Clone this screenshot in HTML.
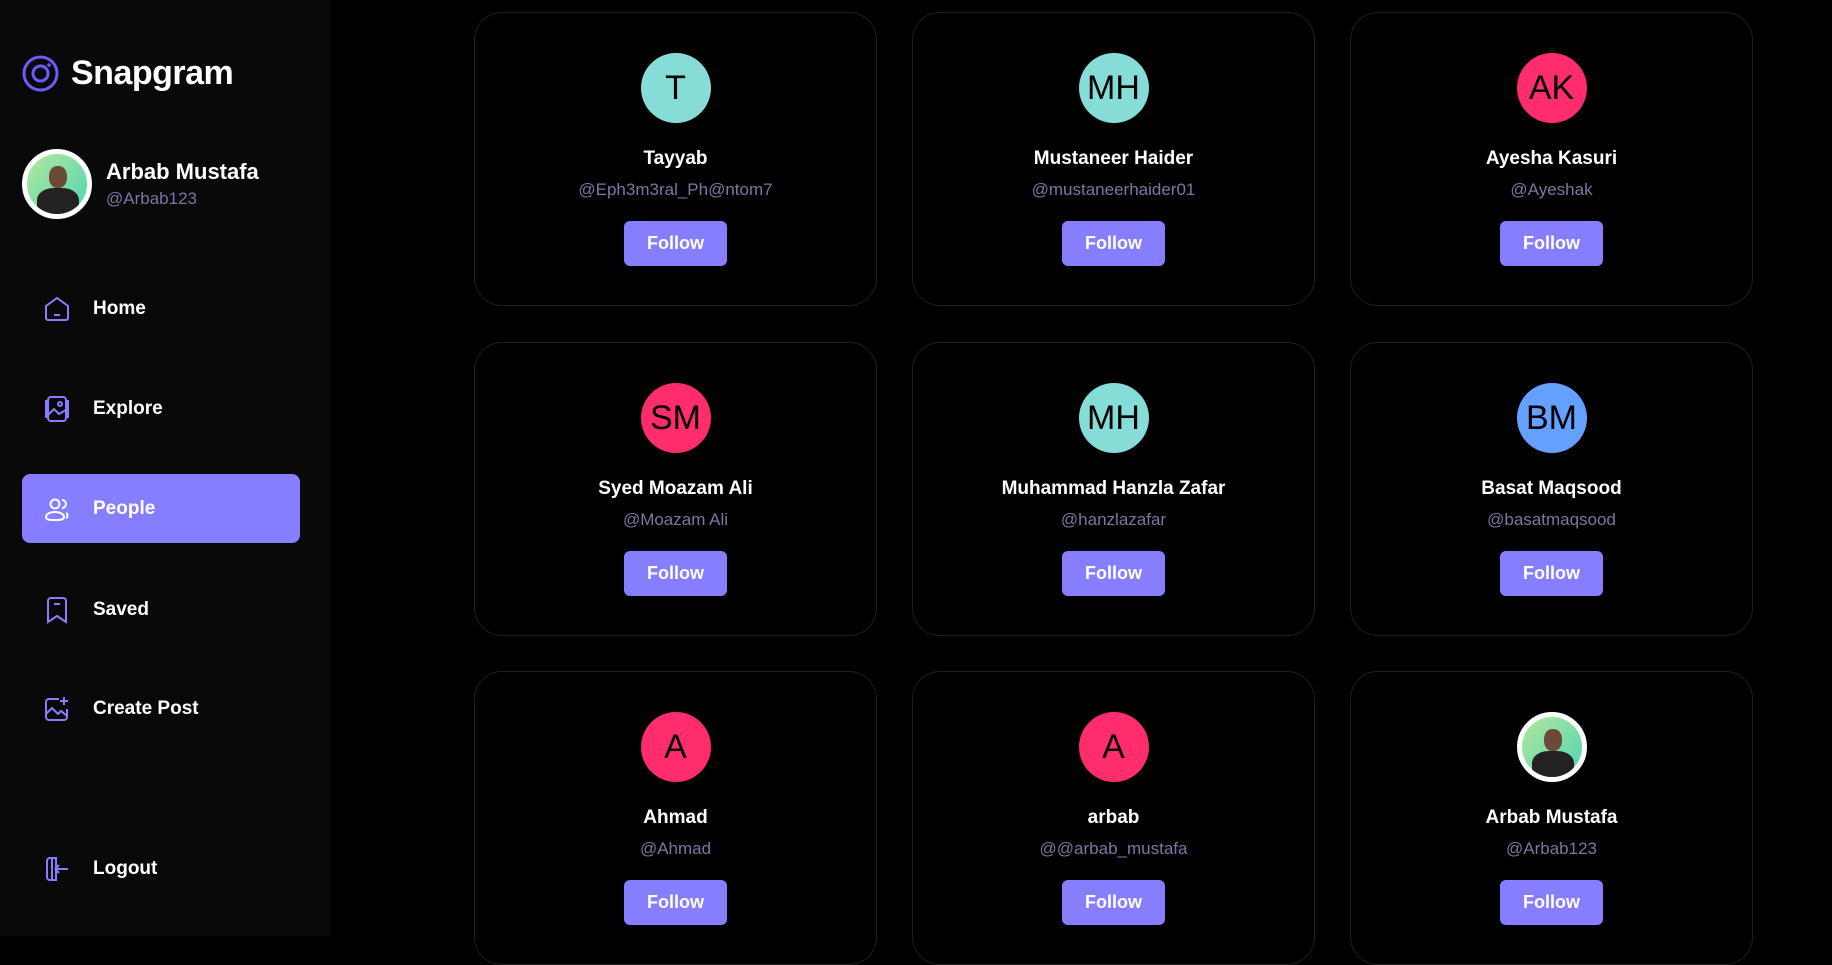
<!DOCTYPE html>
<html><head><meta charset="utf-8"><style>
*{box-sizing:border-box;margin:0;padding:0}
body{width:1832px;height:936px;background:#000;font-family:"Liberation Sans",sans-serif;color:#fff;overflow:hidden;position:relative}
.side{position:absolute;left:0;top:0;width:330px;height:936px;background:#09090a}
.logo{position:absolute;left:22px;top:54px;display:flex;align-items:center}
.logo span{font-size:34px;font-weight:bold;margin-left:12px;letter-spacing:-0.5px}
.prof{position:absolute;left:22px;top:149px;display:flex;align-items:center}
.av{width:70px;height:70px;border-radius:50%;border:5px solid #fff;background:linear-gradient(135deg,#b4e6a0,#4fd6b0);position:relative;overflow:hidden}
.av .h{position:absolute;left:22px;top:12px;width:18px;height:22px;border-radius:45%;background:#6b4a3a}
.av .b{position:absolute;left:10px;top:34px;width:42px;height:30px;border-radius:40% 40% 0 0;background:#222}
.prof .t{margin-left:14px}
.prof .n{font-size:22px;font-weight:bold}
.prof .u{font-size:17px;color:#7878a3;margin-top:4px}
.nav{position:absolute;left:22px;width:278px;height:69px;display:flex;align-items:center;padding-left:21px;font-size:19px;font-weight:bold;border-radius:8px}
.nav svg{width:28px;height:28px;margin-right:22px}
.act{background:#877eff}
.card{position:absolute;width:403px;height:294px;border:1px solid #1f1f22;border-radius:28px;text-align:center}
.ci{width:70px;height:70px;border-radius:50%;margin:40px auto 0;color:#000;font-size:34px;line-height:70px}
.cn{font-size:19px;font-weight:bold;margin-top:25px}
.cu{font-size:17px;color:#7878a3;margin-top:10px}
.fb{width:103px;height:45px;background:#877eff;border-radius:6px;margin:21px auto 0;font-size:18px;font-weight:bold;line-height:45px}
</style></head><body>
<div class="side">
<div class="logo"><svg width="37" height="37" viewBox="0 0 37 37"><circle cx="18.5" cy="18.5" r="16.5" fill="none" stroke="#6a5cff" stroke-width="3"/><circle cx="18.5" cy="18.5" r="7.5" fill="none" stroke="#6a5cff" stroke-width="3"/><circle cx="27" cy="10" r="1.8" fill="#6a5cff"/></svg><span>Snapgram</span></div>
<div class="prof"><div class="av"><div class="b"></div><div class="h"></div></div><div class="t"><div class="n">Arbab Mustafa</div><div class="u">@Arbab123</div></div></div>
<div class="nav" style="top:274px"><svg viewBox="0 0 28 28" fill="none" stroke="#877eff" stroke-width="2"><path d="M3 11L14 3l11 8v12a2 2 0 0 1-2 2H5a2 2 0 0 1-2-2z"/><path d="M11 20h6"/></svg>Home</div>
<div class="nav" style="top:374px"><svg viewBox="0 0 28 28" fill="none" stroke="#877eff" stroke-width="2"><rect x="5" y="2" width="18" height="24" rx="3"/><path d="M5 6H3v16h2M23 6h2v16h-2"/><circle cx="17" cy="9" r="2"/><path d="M5 20l6-6 5 5 7-4"/></svg>Explore</div>
<div class="nav act" style="top:474px"><svg viewBox="0 0 28 28" fill="none" stroke="#fff" stroke-width="2"><circle cx="12" cy="9" r="4.5"/><path d="M3 22c0-3 4-5 9-5s9 2 9 5-4 3-9 3-9 0-9-3z"/><path d="M19 5a4 4 0 0 1 0 8M23 18c2 1 2 4 0 5"/></svg>People</div>
<div class="nav" style="top:575px"><svg viewBox="0 0 28 28" fill="none" stroke="#877eff" stroke-width="2"><path d="M5 5a3 3 0 0 1 3-3h12a3 3 0 0 1 3 3v21l-9-6-9 6z"/><path d="M11 8h6"/></svg>Saved</div>
<div class="nav" style="top:674px"><svg viewBox="0 0 28 28" fill="none" stroke="#877eff" stroke-width="2"><path d="M16 4H6a3 3 0 0 0-3 3v15a3 3 0 0 0 3 3h15a3 3 0 0 0 3-3v-8"/><path d="M21 2v8M17 6h8"/><path d="M3 19l6-6 6 6 3-3 6 5"/></svg>Create Post</div>
<div class="nav" style="top:834px"><svg viewBox="0 0 28 28" fill="none" stroke="#877eff" stroke-width="2"><path d="M13 3H7a3 3 0 0 0-3 3v16a3 3 0 0 0 3 3h6"/><path d="M12 14h13M12 14l4-4M12 14l4 4"/><rect x="9" y="3" width="4" height="22"/></svg>Logout</div>
</div>

<div class="card" style="left:474px;top:12px"><div class="ci" style="background:#86ddd8">T</div><div class="cn">Tayyab</div><div class="cu">@Eph3m3ral_Ph@ntom7</div><div class="fb">Follow</div></div>
<div class="card" style="left:912px;top:12px"><div class="ci" style="background:#86ddd8">MH</div><div class="cn">Mustaneer Haider</div><div class="cu">@mustaneerhaider01</div><div class="fb">Follow</div></div>
<div class="card" style="left:1350px;top:12px"><div class="ci" style="background:#ff2d6b">AK</div><div class="cn">Ayesha Kasuri</div><div class="cu">@Ayeshak</div><div class="fb">Follow</div></div>
<div class="card" style="left:474px;top:342px"><div class="ci" style="background:#ff2d6b">SM</div><div class="cn">Syed Moazam Ali</div><div class="cu">@Moazam Ali</div><div class="fb">Follow</div></div>
<div class="card" style="left:912px;top:342px"><div class="ci" style="background:#86ddd8">MH</div><div class="cn">Muhammad Hanzla Zafar</div><div class="cu">@hanzlazafar</div><div class="fb">Follow</div></div>
<div class="card" style="left:1350px;top:342px"><div class="ci" style="background:#64a0ff">BM</div><div class="cn">Basat Maqsood</div><div class="cu">@basatmaqsood</div><div class="fb">Follow</div></div>
<div class="card" style="left:474px;top:671px"><div class="ci" style="background:#ff2d6b">A</div><div class="cn">Ahmad</div><div class="cu">@Ahmad</div><div class="fb">Follow</div></div>
<div class="card" style="left:912px;top:671px"><div class="ci" style="background:#ff2d6b">A</div><div class="cn">arbab</div><div class="cu">@@arbab_mustafa</div><div class="fb">Follow</div></div>
<div class="card" style="left:1350px;top:671px"><div class="ci av" style="margin-top:40px"><div class="b"></div><div class="h"></div></div><div class="cn">Arbab Mustafa</div><div class="cu">@Arbab123</div><div class="fb">Follow</div></div>
</body></html>
